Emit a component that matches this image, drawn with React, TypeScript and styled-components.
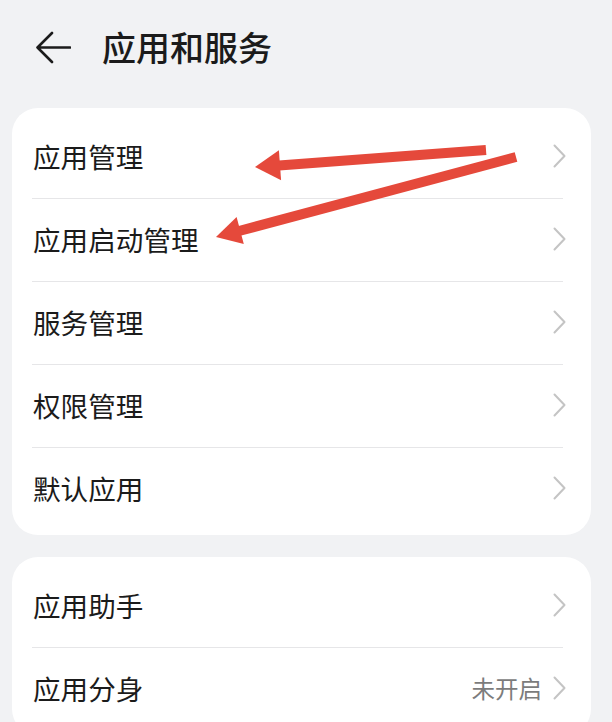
import styled, { createGlobalStyle } from "styled-components";

const GlobalStyle = createGlobalStyle`
  html, body {
    margin: 0;
    padding: 0;
    background: #f1f2f4;
  }
  body {
    font-family: "Noto Sans CJK SC", "Noto Sans", sans-serif;
    color: #1b1b1b;
  }
`;

type Item = {
  label: string;
  value?: string;
};

const groups: Item[][] = [
  [
    { label: "应用管理" },
    { label: "应用启动管理" },
    { label: "服务管理" },
    { label: "权限管理" },
    { label: "默认应用" },
  ],
  [{ label: "应用助手" }, { label: "应用分身", value: "未开启" }],
];

function BackArrow() {
  return (
    <svg width="36" height="33" viewBox="0 0 36 33">
      <path
        d="M17 2 L2.5 16.5 L17 31 M2.5 16.5 L35 16.5"
        fill="none"
        stroke="#1b1b1b"
        strokeWidth="2.6"
        strokeLinecap="round"
        strokeLinejoin="round"
      />
    </svg>
  );
}

function Chevron() {
  return (
    <svg width="13" height="24" viewBox="0 0 13 24">
      <path
        d="M1.5 1.5 L11.5 12 L1.5 22.5"
        fill="none"
        stroke="#c4c4c4"
        strokeWidth="2"
        strokeLinecap="round"
        strokeLinejoin="round"
      />
    </svg>
  );
}

function Annotations() {
  return (
    <Overlay width="612" height="722" viewBox="0 0 612 722">
      <line x1="486" y1="150" x2="279" y2="165.5" stroke="#e5493b" strokeWidth="10" />
      <polygon points="255,167 278.9,150.2 281.1,180.2" fill="#e5493b" />
      <line x1="516" y1="157" x2="239" y2="231" stroke="#e5493b" strokeWidth="10" />
      <polygon points="216,237 236.6,217.1 243.8,244.1" fill="#e5493b" />
    </Overlay>
  );
}

export default function App() {
  return (
    <Page>
      <GlobalStyle />
      <Header>
        <BackButton>
          <BackArrow />
        </BackButton>
        <Title>应用和服务</Title>
      </Header>
      <Groups>
        {groups.map((group, gi) => (
          <Card key={gi}>
            {group.map((item, index) => (
              <div key={item.label}>
                {index > 0 ? <Divider /> : null}
                <Row>
                  <Label>{item.label}</Label>
                  <Trail>
                    {item.value ? <Value>{item.value}</Value> : null}
                    <Chevron />
                  </Trail>
                </Row>
              </div>
            ))}
          </Card>
        ))}
      </Groups>
      <Annotations />
    </Page>
  );
}

const Page = styled.div`
  position: relative;
  width: 612px;
  height: 722px;
  overflow: hidden;
  background: #f1f2f4;
  padding: 0 21px 0 12px;
  box-sizing: border-box;
`;

const Header = styled.div`
  display: flex;
  align-items: center;
  height: 94px;
  margin-bottom: 14px;
  padding-left: 23px;
  gap: 31px;
`;

const BackButton = styled.div`
  display: flex;
  align-items: center;
  width: 36px;
  height: 33px;
`;

const Title = styled.h1`
  margin: 0;
  font-size: 34px;
  font-weight: 500;
  line-height: 1;
  color: #1b1b1b;
`;

const Groups = styled.div`
  display: flex;
  flex-direction: column;
  gap: 22px;
`;

const Card = styled.div`
  background: #ffffff;
  border-radius: 26px;
  padding: 8px 0 5px;
`;

const Divider = styled.div`
  height: 1px;
  background: #e6e6e8;
  margin: 0 28px 0 20px;
`;

const Row = styled.div`
  display: flex;
  align-items: center;
  justify-content: space-between;
  height: 82px;
  padding: 0 25px 0 21px;
`;

const Label = styled.span`
  font-size: 27.6px;
  font-weight: 400;
  line-height: 1;
  color: #1b1b1b;
`;

const Trail = styled.div`
  display: flex;
  align-items: center;
  gap: 11px;
  margin-top: -2px;
`;

const Value = styled.span`
  font-size: 23.5px;
  line-height: 1;
  color: #7c7c7c;
  margin-top: 2px;
`;

const Overlay = styled.svg`
  position: absolute;
  top: 0;
  left: 0;
  pointer-events: none;
`;
